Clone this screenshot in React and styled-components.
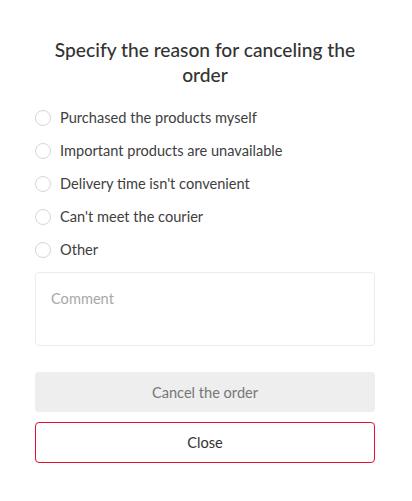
import React from "react";
import styled, { createGlobalStyle } from "styled-components";

const Global = createGlobalStyle`
  html, body { margin: 0; padding: 0; background: #fff; }
  body { font-family: "Lato", "Open Sans", sans-serif; color: #333; }
`;

const Modal = styled.div`
  width: 412px;
  box-sizing: border-box;
  padding: 37px 37px 0 35px;
  display: flex;
  flex-direction: column;
`;

const Title = styled.h2`
  margin: 0 0 14px;
  font-size: 19.2px;
  line-height: 25px;
  font-weight: 500;
  text-align: center;
  color: #333;
  padding: 0 10px;
`;

const Options = styled.div`
  display: flex;
  flex-direction: column;
`;

const Option = styled.label`
  display: flex;
  align-items: center;
  gap: 9px;
  height: 33px;
  font-size: 14.6px;
  color: #404040;
  cursor: pointer;
`;

const Radio = styled.span`
  width: 16px;
  height: 16px;
  box-sizing: border-box;
  border: 1px solid #d6d6d6;
  border-radius: 50%;
  flex: none;
`;

const Comment = styled.textarea`
  margin-top: 6px;
  height: 74px;
  box-sizing: border-box;
  border: 1px solid #ebebeb;
  border-radius: 4px;
  padding: 17px 15px;
  font-family: inherit;
  font-size: 14.6px;
  resize: none;
  outline: none;
  &::placeholder { color: #a8a8a8; }
`;

const Button = styled.button`
  height: ${(p) => (p.$outline ? "41px" : "40px")};
  box-sizing: border-box;
  border-radius: 4px;
  font-family: inherit;
  font-size: 14.6px;
  cursor: pointer;
  background: ${(p) => (p.$outline ? "#fff" : "#eeeeee")};
  color: ${(p) => (p.$outline ? "#333" : "#777")};
  border: ${(p) => (p.$outline ? "1px solid #e0102f" : "none")};
  margin-top: ${(p) => p.$mt}px;
`;

const reasons = [
  "Purchased the products myself",
  "Important products are unavailable",
  "Delivery time isn't convenient",
  "Can't meet the courier",
  "Other",
];

export default function App() {
  return (
    <>
      <Global />
      <Modal>
        <Title>Specify the reason for canceling the order</Title>
        <Options>
          {reasons.map((r) => (
            <Option key={r}>
              <Radio />
              {r}
            </Option>
          ))}
        </Options>
        <Comment placeholder="Comment" />
        <Button $mt={26}>Cancel the order</Button>
        <Button $outline $mt={10}>Close</Button>
      </Modal>
    </>
  );
}
